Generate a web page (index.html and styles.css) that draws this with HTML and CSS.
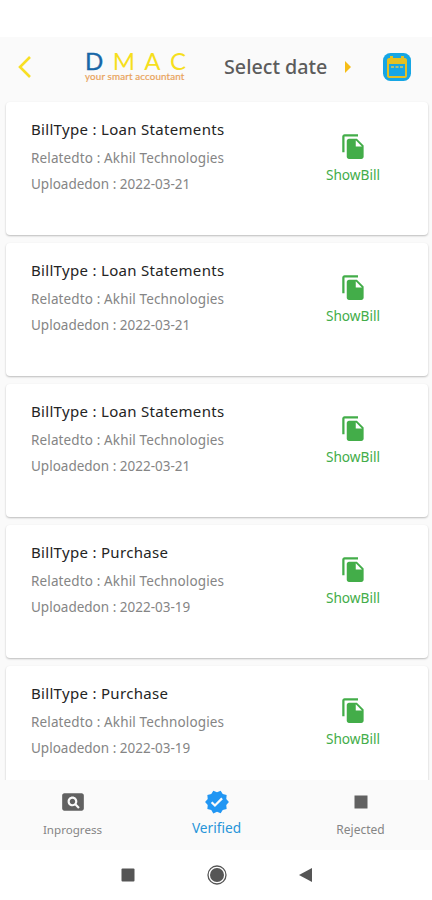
FILE: index.html
```html
<!DOCTYPE html>
<html lang="en">
<head>
<meta charset="utf-8">
<title>DMAC</title>
<link rel="stylesheet" href="styles.css">
</head>
<body>
<svg class="defs" aria-hidden="true">
  <symbol id="copy" viewBox="0 0 24 24"><path d="M16 1H4c-1.1 0-2 .9-2 2v14h2V3h12V1zm-1 4l6 6v10c0 1.1-.9 2-2 2H7.99C6.89 23 6 22.1 6 21V7c0-1.1.89-2 1.99-2H15zm-1 7h5.500L14 6.500V12z"/></symbol>
</svg>
<header class="bar">
  <svg class="back" viewBox="0 0 14 22"><path d="M12 1 2 11l10 10"/></svg>
  <div class="logo">
    <div class="brand"><span class="blue">D</span><span>M</span><span>A</span><span>C</span></div>
    <div class="tagline">your smart accountant</div>
  </div>
  <span class="select">Select date</span>
  <svg class="caret" viewBox="0 0 6 12"><path d="M0 0l6 6-6 6z"/></svg>
  <svg class="calendar" viewBox="0 0 28 28">
    <rect width="28" height="28" rx="7.500" fill="#16a6e4"/>
    <path d="M7 5V3h3v2h8V3h3v2h1c1 0 2 1 2 2v16c0 1-1 2-2 2H6c-1 0-2-1-2-2V7c0-1 1-2 2-2z" fill="#e3c022"/>
    <path d="M6 11h16v12H6z" fill="#16a6e4"/>
    <path d="M8 14h3m1.500 0h3m1.500 0h3" stroke="#a9bf78" stroke-width="2"/>
  </svg>
</header>
<main class="list">
  <article class="card"><div class="info"><h2>BillType : Loan Statements</h2><p class="related">Relatedto : Akhil Technologies</p><p class="date">Uploadedon : 2022-03-21</p></div><div class="show"><svg><use href="#copy"/></svg><span>ShowBill</span></div></article>
  <article class="card"><div class="info"><h2>BillType : Loan Statements</h2><p class="related">Relatedto : Akhil Technologies</p><p class="date">Uploadedon : 2022-03-21</p></div><div class="show"><svg><use href="#copy"/></svg><span>ShowBill</span></div></article>
  <article class="card"><div class="info"><h2>BillType : Loan Statements</h2><p class="related">Relatedto : Akhil Technologies</p><p class="date">Uploadedon : 2022-03-21</p></div><div class="show"><svg><use href="#copy"/></svg><span>ShowBill</span></div></article>
  <article class="card"><div class="info"><h2>BillType : Purchase</h2><p class="related">Relatedto : Akhil Technologies</p><p class="date">Uploadedon : 2022-03-19</p></div><div class="show"><svg><use href="#copy"/></svg><span>ShowBill</span></div></article>
  <article class="card"><div class="info"><h2>BillType : Purchase</h2><p class="related">Relatedto : Akhil Technologies</p><p class="date">Uploadedon : 2022-03-19</p></div><div class="show"><svg><use href="#copy"/></svg><span>ShowBill</span></div></article>
</main>
<nav class="tabs">
  <div class="tab"><svg viewBox="0 0 24 24"><path d="M11.500 9C10.120 9 9 10.120 9 11.500s1.120 2.500 2.500 2.500 2.500-1.120 2.500-2.500S12.880 9 11.500 9zM20 4H4c-1.100 0-2 .9-2 2v12c0 1.100.9 2 2 2h16c1.100 0 2-.9 2-2V6c0-1.100-.9-2-2-2zm-3.210 14.210l-2.910-2.910c-.69.440-1.510.7-2.390.7C9.010 16 7 13.990 7 11.500S9.010 7 11.500 7 16 9.010 16 11.500c0 .88-.26 1.690-.7 2.390l2.910 2.900-1.420 1.420z"/></svg><span>Inprogress</span></div>
  <div class="tab active"><svg viewBox="0 0 24 24"><path d="M23 12l-2.440-2.790.34-3.690-3.610-.82-1.890-3.200L12 2.960 8.600 1.500 6.710 4.690 3.100 5.500l.34 3.700L1 12l2.440 2.790-.34 3.700 3.610.82L8.600 22.500l3.400-1.470 3.400 1.460 1.890-3.190 3.610-.82-.34-3.690L23 12zm-12.910 4.720l-3.800-3.810 1.480-1.480 2.320 2.330 5.850-5.870 1.480 1.480-7.330 7.350z"/></svg><span>Verified</span></div>
  <div class="tab rejected"><svg viewBox="0 0 24 24"><path d="M6 6h12v12H6z"/></svg><span>Rejected</span></div>
</nav>
<footer class="system">
  <svg viewBox="0 0 22 22"><rect x="4.500" y="4.500" width="13" height="13" rx="1"/></svg>
  <svg viewBox="0 0 22 22"><circle cx="11" cy="11" r="9" fill="none" stroke="#555" stroke-width="1.300"/><circle cx="11" cy="11" r="7"/></svg>
  <svg viewBox="0 0 22 22"><path d="M4 11l13-7v14z"/></svg>
</footer>
</body>
</html>
```

FILE: styles.css
```css
* { box-sizing: border-box; }
body { margin: 0; width: 432px; height: 900px; overflow: hidden; display: flex; flex-direction: column; padding-top: 37px; background: #fff; font-family: "Noto Sans", sans-serif; }
svg { display: block; flex: none; }
.defs { display: none; }
.bar { height: 60px; flex: none; display: flex; align-items: center; padding-left: 18px; background: #fafafa; }
.back { width: 14px; height: 22px; fill: none; stroke: #f8df24; stroke-width: 2.6; }
.logo { width: 102px; margin-left: 53px; }
.brand { display: flex; justify-content: space-between; padding-right: 1px; font: 24px/24px Lato, sans-serif; color: #f6df1d; }
.blue { color: #1767a8; -webkit-text-stroke: .4px; }
.tagline { margin-top: -1px; font: 9.8px/9px Lato, sans-serif; color: #e9a35b; white-space: nowrap; letter-spacing: .15px; -webkit-text-stroke: .2px; }
.bar .logo { padding-bottom: 4px; }
.select { width: 104px; margin-left: 37px; font-size: 19.7px; line-height: 26px; font-weight: 500; color: #5c5c5c; white-space: nowrap; }
.caret { width: 6px; height: 12px; margin-left: 17px; fill: #f6bd16; }
.calendar { width: 28px; height: 28px; margin-left: 32px; }
.list { flex: 1; min-height: 0; overflow: hidden; display: flex; flex-direction: column; gap: 8px; padding: 5px 4px 0 6px; background: #fafafa; }
.card { height: 133px; flex: none; display: flex; justify-content: space-between; padding: 17px 47px 0 25px; background: #fff; border-radius: 4px; box-shadow: 0 1px 2px rgba(0,0,0,.25); }
.info { white-space: nowrap; }
h2, p { margin: 0; font-weight: 400; }
h2 { font-size: 15px; line-height: 20px; letter-spacing: .31px; color: #242424; }
p { font-size: 13.5px; line-height: 20px; color: #858585; }
.related { margin-top: 9px; letter-spacing: .13px; }
.date { margin-top: 6px; }
.show { width: 56px; padding-top: 14px; display: flex; flex-direction: column; align-items: center; color: #43ad49; font-size: 13.7px; line-height: 20px; }
.show svg { width: 27px; height: 27px; fill: currentColor; }
.show span { margin-top: 5px; }
.tabs { height: 70px; flex: none; display: flex; background: #fafafa; }
.tab { flex: 1; display: flex; flex-direction: column; align-items: center; padding: 9px 0 0 1px; color: #858585; font-size: 11.6px; line-height: 18px; }
.tab svg { width: 26px; height: 26px; fill: #616161; }
.tab span { margin-top: 6px; }
.rejected { font-size: 12px; }
.active { color: #2795d9; font-size: 13.7px; }
.active svg { fill: #2196f3; }
.active span { margin-top: 4px; }
.system { height: 50px; flex: none; display: flex; justify-content: center; gap: 67px; padding: 14px 0 0 1px; }
.system svg { width: 22px; height: 22px; fill: #555; }
```
